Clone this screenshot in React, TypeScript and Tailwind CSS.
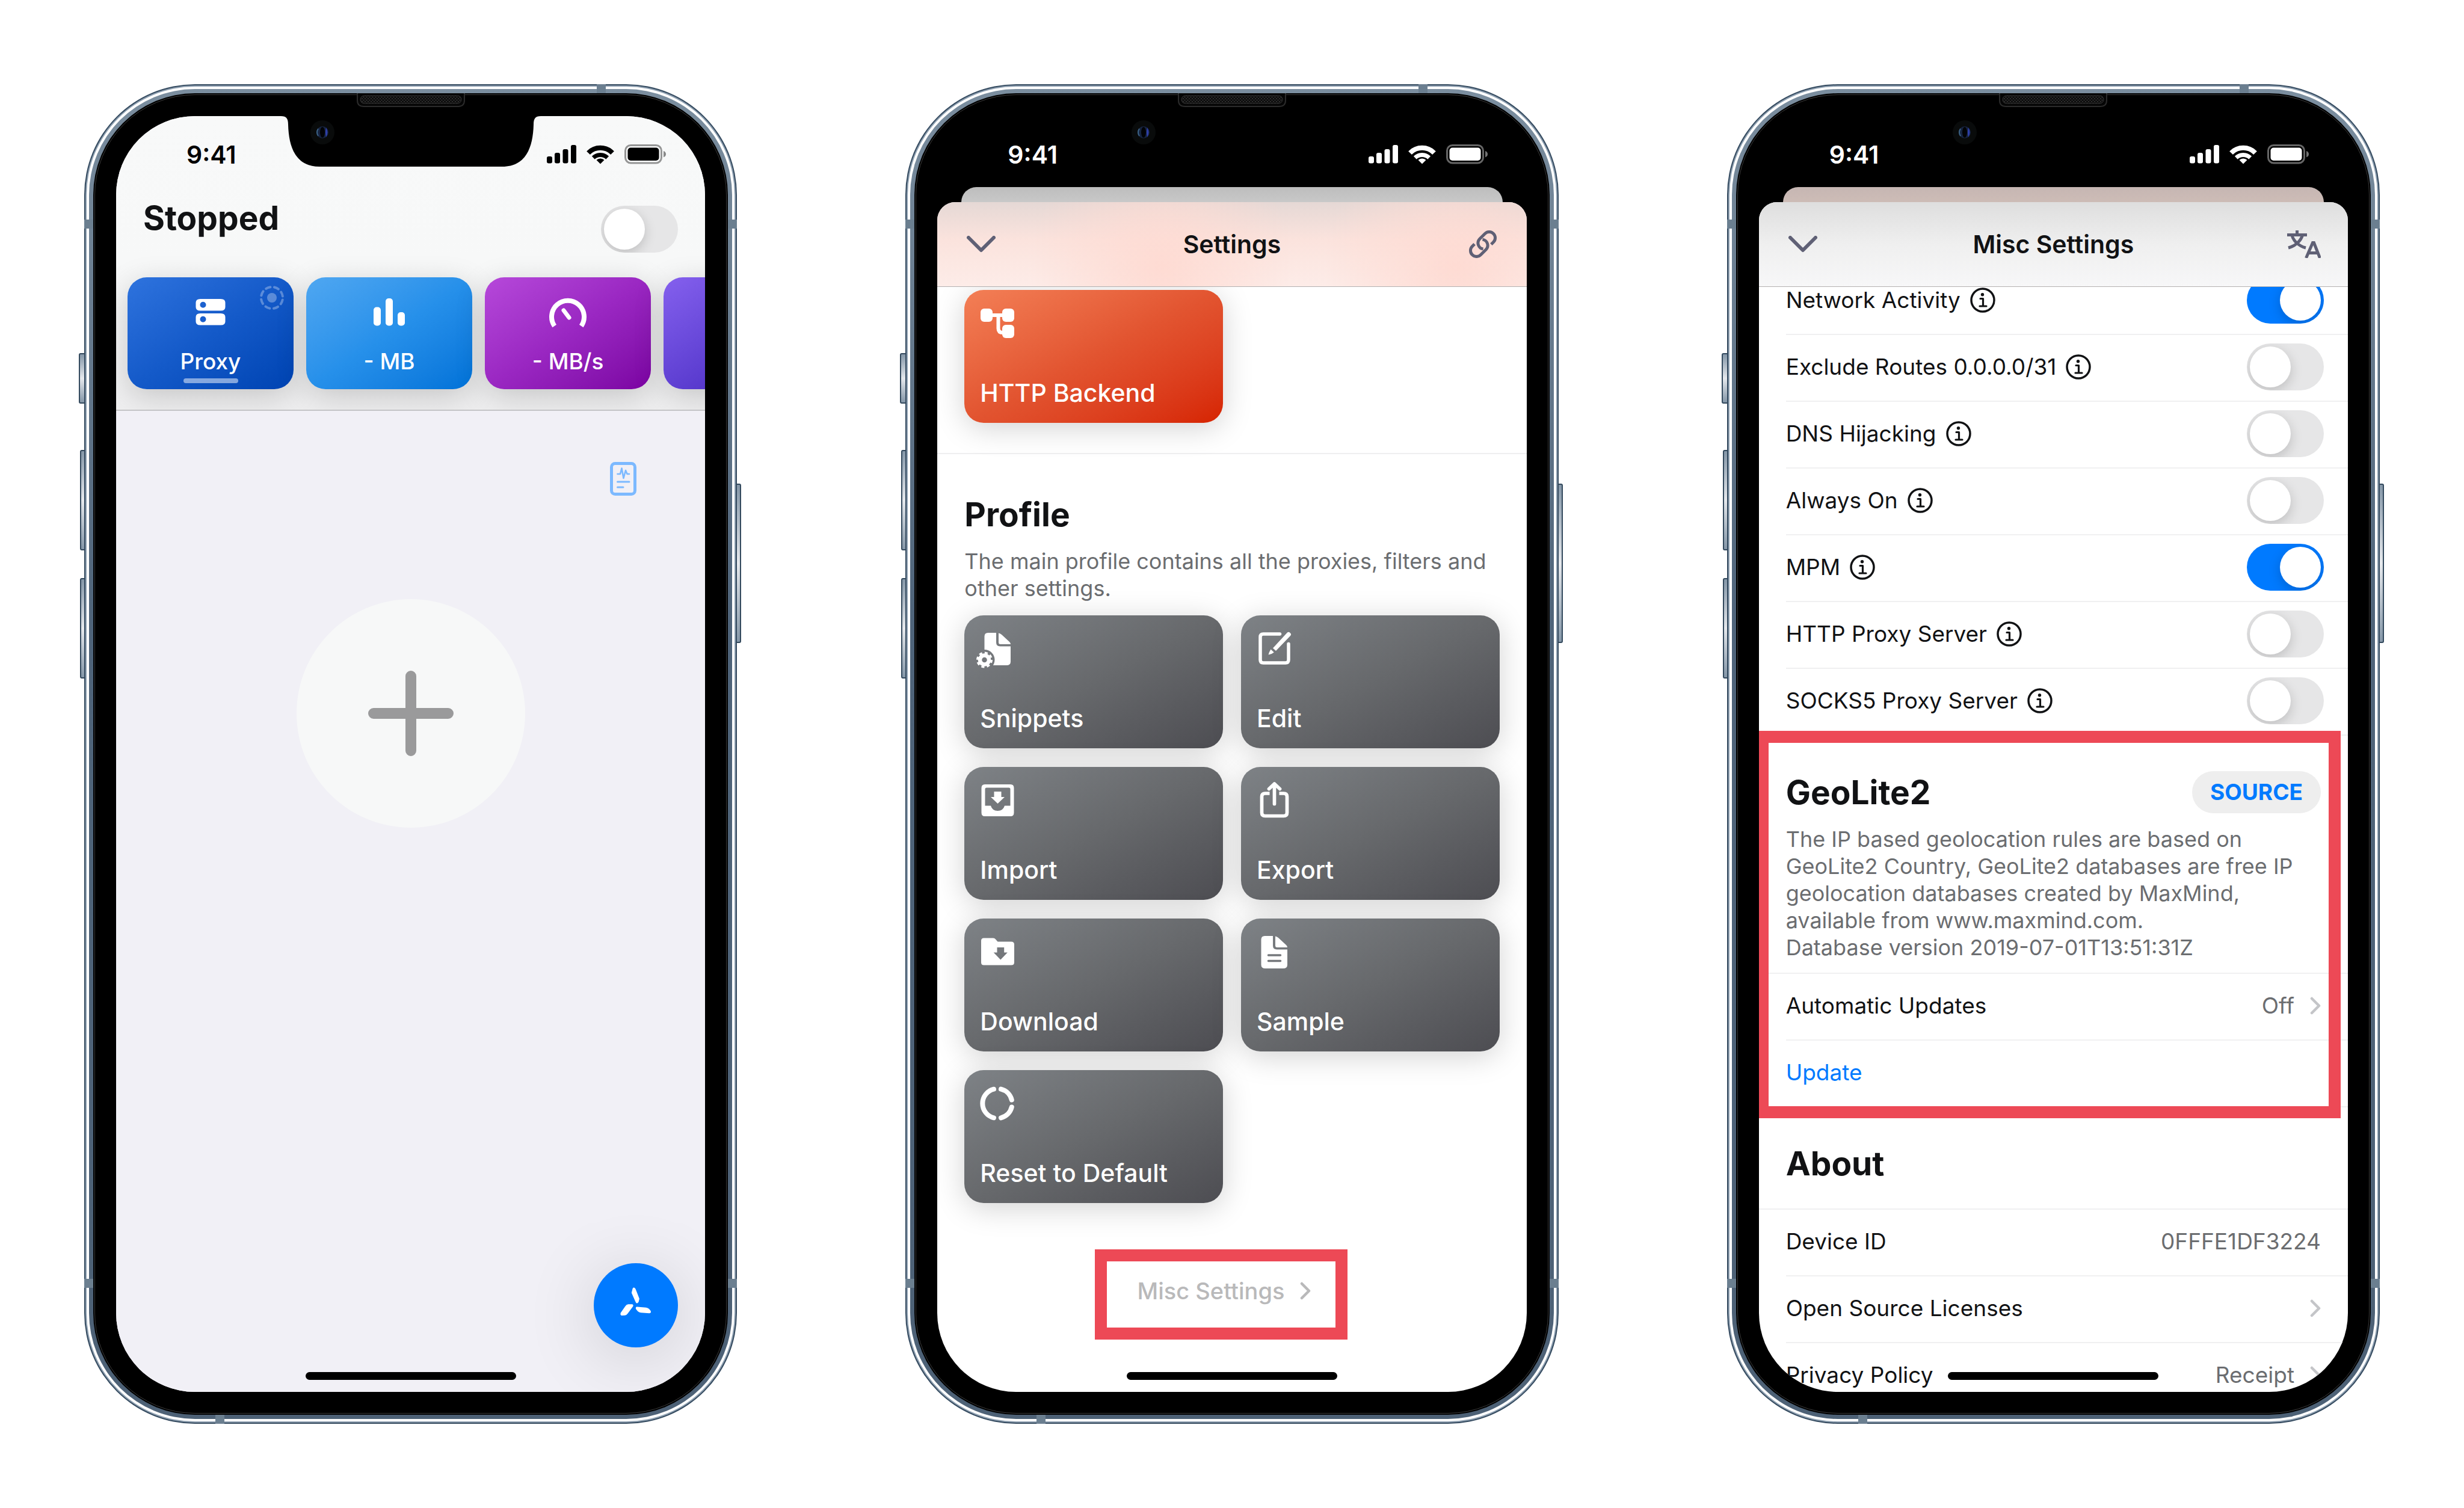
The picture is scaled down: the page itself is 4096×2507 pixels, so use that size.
import type { ReactNode } from "react";

/* ---------- Device ---------- */

function StatusIcons() {
  return (
    <svg viewBox="0 0 198 34" className="h-[34px] w-[198px]" fill="currentColor" aria-hidden="true">
      <rect x="0" y="20" width="9" height="11.5" rx="3" />
      <rect x="13" y="14" width="9" height="17.5" rx="3" />
      <rect x="26.5" y="8" width="9" height="23.5" rx="3" />
      <rect x="40" y="1" width="9" height="30.5" rx="3" />
      <g fill="none" stroke="currentColor">
        <path d="M69 14.2 A28 28 0 0 1 109 14.2" strokeWidth="8" />
        <path d="M77.3 22.2 A17 17 0 0 1 100.7 22.2" strokeWidth="7" />
      </g>
      <path d="M82.5 26 A9.5 9.5 0 0 1 95.5 26 L89 32.5 Z" />
      <rect x="130.5" y="1.5" width="60" height="29.5" rx="9" fill="none" stroke="currentColor" strokeWidth="3" opacity="0.4" />
      <rect x="134.5" y="5.5" width="52" height="21.5" rx="5" />
      <path d="M194 11 Q198 12.5 198 16.3 T194 21.5 Z" opacity="0.45" />
    </svg>
  );
}

function SensorHousing({ notch }: { notch: boolean }) {
  return (
    <svg
      viewBox="0 0 440 124"
      className="absolute left-1/2 top-[15px] z-20 h-[124px] w-[440px] -translate-x-1/2"
      aria-hidden="true"
    >
      <defs>
        <pattern id="grill" width="5" height="5" patternUnits="userSpaceOnUse">
          <rect width="5" height="5" fill="#0d0d0d" />
          <circle cx="1.5" cy="1.5" r="1" fill="#3a3a3a" />
          <circle cx="4" cy="4" r="1" fill="#3a3a3a" />
        </pattern>
      </defs>
      {notch && (
        <path
          d="M4 36 V38 C13 38 16 42 16 52 C17 92 30 122 68 122 H372 C410 122 423 92 424 52 C424 42 427 38 436 38 V36 Z"
          fill="#000"
        />
      )}
      <path d="M131 0 V12 Q131 22 142 22 H298 Q309 22 309 12 V0" fill="#050505" stroke="#2b2b2b" strokeWidth="2" />
      <rect x="136" y="4" width="168" height="13" rx="6.5" fill="url(#grill)" stroke="#333" strokeWidth="1" />
      <circle cx="73" cy="65" r="20" fill="#090b0b" />
      <circle cx="73" cy="65" r="10" fill="#16233f" />
      <ellipse cx="73" cy="65" rx="4" ry="9" fill="#020306" />
      <path d="M79 57 Q84 65 79 73 Q77 65 79 57Z" fill="#2f3fa8" />
      <path d="M66 59 Q62 65 66 71" fill="none" stroke="#3c6386" strokeWidth="2" />
    </svg>
  );
}

function Band({ place }: { place: string }) {
  return <span aria-hidden="true" className={`absolute z-10 size-[15px] bg-[#6b7f90] ${place}`} />;
}

function SideKey({ place }: { place: string }) {
  return (
    <span
      aria-hidden="true"
      className={`absolute rounded-[3px] border-2 border-[#33495d] bg-linear-to-b from-[#8597a8] via-[#e6e9ed] to-[#8597a8] ${place}`}
    />
  );
}

function Phone({ name, dark, children }: { name: string; dark: boolean; children: ReactNode }) {
  return (
    <section aria-label={name} className="relative">
      <SideKey place="-left-[9px] top-[447px] h-[84px] w-[13px]" />
      <SideKey place="-left-[7px] top-[608px] h-[167px] w-[13px]" />
      <SideKey place="-left-[7px] top-[821px] h-[167px] w-[13px]" />
      <SideKey place="-right-[7px] top-[664px] h-[265px] w-[13px]" />
      <div className="relative rounded-[184px] bg-[#344a5f] p-[2px]">
        <div className="rounded-[182px] bg-[#8fa0b1] p-[2px]">
          <div className="rounded-[180px] bg-white p-[4px]">
            <div className="rounded-[176px] bg-linear-to-b from-[#7b8e9f] via-[#4f647a] via-40% to-[#4d6176] p-[7px]">
              <div className="rounded-[169px] bg-black p-[2px]">
                <div className="rounded-[167px] border border-[#3a3a3a] bg-black p-[35px]">
                  <div
                    className={`relative flex aspect-[390/845] w-full flex-col overflow-hidden rounded-[131px] ${
                      dark ? "bg-black text-white" : "bg-[#f1f0f6] text-black"
                    }`}
                  >
                    {children}
                    <span
                      aria-hidden="true"
                      className="absolute bottom-[20px] left-1/2 z-20 h-[13px] w-[350px] -translate-x-1/2 rounded-full bg-black"
                    />
                  </div>
                </div>
              </div>
            </div>
          </div>
        </div>
        <Band place="top-0 right-[218px]" />
        <Band place="bottom-0 left-[218px]" />
        <Band place="left-0 top-[225px]" />
        <Band place="right-0 top-[225px]" />
        <Band place="left-0 bottom-[226px]" />
        <Band place="right-0 bottom-[226px]" />
        <SensorHousing notch={!dark} />
      </div>
    </section>
  );
}

function StatusBar() {
  return (
    <div className="flex h-[118px] shrink-0 items-center justify-between pl-[117px] pr-[65px] pt-[10px]">
      <time className="text-[41px] leading-[44px] font-semibold">9:41</time>
      <StatusIcons />
    </div>
  );
}

/* ---------- Shared controls ---------- */

function Toggle({ id, label, on }: { id: string; label?: string; on?: boolean }) {
  return (
    <input
      type="checkbox"
      role="switch"
      id={id}
      aria-label={label}
      defaultChecked={on}
      className="relative h-[78px] w-[128px] shrink-0 appearance-none overflow-hidden rounded-full bg-[#e6e6e7] before:absolute before:left-[5px] before:top-[5px] before:size-[68px] before:rounded-full before:bg-white before:shadow-[0_6px_20px_rgba(0,0,0,0.18)] before:content-[''] checked:bg-[#007aff] checked:before:left-[55px]"
    />
  );
}

function Chevron({ tone }: { tone: string }) {
  return (
    <svg viewBox="0 0 18 30" className={`h-[30px] w-[18px] shrink-0 ${tone}`} fill="none" aria-hidden="true">
      <path d="M3 3 L15 15 L3 27" stroke="currentColor" strokeWidth="4.500" strokeLinecap="round" strokeLinejoin="round" />
    </svg>
  );
}

function SheetHeader({ title, tint, action, children }: { title: string; tint: string; action: string; children: ReactNode }) {
  return (
    <header
      className={`relative z-10 flex h-[141px] shrink-0 items-center justify-between border-b border-[#b3b0b0] px-[45px] text-[#5f6075] ${tint}`}
    >
      <button type="button" aria-label="Close" className="flex size-[56px] items-center justify-center">
        <svg viewBox="0 0 48 28" className="h-[28px] w-[48px]" fill="none" aria-hidden="true">
          <path d="M3 3 L24 24 L45 3" stroke="currentColor" strokeWidth="6" strokeLinecap="round" strokeLinejoin="round" />
        </svg>
      </button>
      <h1 className="text-[41px] leading-[48px] font-semibold text-[#111214]">{title}</h1>
      <button type="button" aria-label={action} className="flex size-[56px] items-center justify-center">
        {children}
      </button>
    </header>
  );
}

function Sheet({ behind, children }: { behind: string; children: ReactNode }) {
  return (
    <>
      <div aria-hidden="true" className={`mx-[40px] h-[25px] shrink-0 rounded-t-[25px] ${behind}`} />
      <div className="flex min-h-0 flex-1 flex-col overflow-hidden rounded-t-[30px] bg-white text-[#111214]">{children}</div>
    </>
  );
}

/* ---------- Screen 1: dashboard ---------- */

function StatCard({ label, fill, active, children }: { label: string; fill: string; active?: boolean; children?: ReactNode }) {
  return (
    <button
      type="button"
      className={`relative flex h-[186px] w-[276px] shrink-0 flex-col items-center rounded-[32px] pt-[34px] text-white shadow-[0_12px_50px_rgba(0,0,0,0.18)] ${fill}`}
    >
      <svg viewBox="0 0 64 50" className="h-[50px] w-[64px] overflow-visible" fill="currentColor" aria-hidden="true">
        {children}
      </svg>
      <span className="mt-[34px] text-[37px] leading-[44px] font-medium">{label}</span>
      {active && (
        <>
          <span className="mt-[6px] h-[8px] w-[91px] rounded-full bg-white/50" />
          <svg viewBox="0 0 44 44" className="absolute right-[14px] top-[12px] size-[44px] opacity-30" fill="none" aria-hidden="true">
            <circle cx="22" cy="22" r="18" stroke="white" strokeWidth="4" strokeDasharray="7.5 6.64" strokeLinecap="round" transform="rotate(11 22 22)" />
            <circle cx="22" cy="22" r="8" fill="white" />
          </svg>
        </>
      )}
    </button>
  );
}

function Dashboard() {
  return (
    <>
      <header className="shrink-0 overflow-hidden border-b-2 border-[#c4c4c6] bg-linear-to-b from-[#f8f9f9] via-[#f7f8f8] via-50% to-[#efeff0] pb-[34px]">
        <StatusBar />
        <div className="flex items-start justify-between px-[45px] pt-[31px]">
          <h1 className="text-[55px] leading-[40px] font-bold text-[#111214]">Stopped</h1>
          <Toggle id="vpn" label="Connection" />
        </div>
        <div className="flex gap-[21px] pl-[19px] pt-[41px]">
          <StatCard label="Proxy" active fill="bg-linear-to-br from-[#2e73de] via-[#145ac9] to-[#0043b2]">
            <path
              fillRule="evenodd"
              d="M15 2 H49 Q56.500 2 56.500 8 V15.500 Q56.500 21.500 49 21.500 H15 Q7.500 21.500 7.500 15.500 V8 Q7.500 2 15 2 Z M19.500 6.800 A5 5 0 1 0 19.500 16.800 A5 5 0 1 0 19.500 6.800 Z M15 26 H49 Q56.500 26 56.500 32 V39.500 Q56.500 45.500 49 45.500 H15 Q7.500 45.500 7.500 39.500 V32 Q7.500 26 15 26 Z M19.500 30.800 A5 5 0 1 0 19.500 40.800 A5 5 0 1 0 19.500 30.800 Z"
            />
          </StatCard>
          <StatCard label="- MB" fill="bg-linear-to-br from-[#4fa7f1] via-[#2690ea] to-[#0072d8]">
            <rect x="6" y="15.500" width="12" height="31" rx="5" />
            <rect x="26" y="1" width="12" height="45.500" rx="5" />
            <rect x="46" y="24" width="12" height="22.500" rx="5" />
          </StatCard>
          <StatCard label="- MB/s" fill="bg-linear-to-br from-[#b648da] via-[#9a27c2] to-[#7b02a2]">
            <path d="M9.700 47 A27 27 0 1 1 54.300 47" fill="none" stroke="currentColor" strokeWidth="8" />
            <path d="M25 21 L34 33" fill="none" stroke="currentColor" strokeWidth="7" strokeLinecap="round" />
          </StatCard>
          <StatCard label="" fill="bg-linear-to-br from-[#8560ee] to-[#3f18b8]" />
        </div>
      </header>
      <main className="flex flex-1 flex-col items-end bg-[#f1f0f6]">
        <button type="button" aria-label="Activity log" className="mr-[114px] mt-[85px] text-[#7cb9ff]">
          <svg viewBox="0 0 44 56" className="h-[56px] w-[44px]" fill="none" stroke="currentColor" strokeLinecap="round" strokeLinejoin="round" aria-hidden="true">
            <rect x="2.500" y="2.500" width="39" height="51" rx="6" strokeWidth="5" />
            <path d="M12.500 20 H17 L19.500 10.500 L22.500 27 L26 14 L28.500 20 H32" strokeWidth="2.600" />
            <path d="M12.500 33 H32 M12.500 42 H22" strokeWidth="3" />
          </svg>
        </button>
        <button
          type="button"
          aria-label="Add"
          className="mt-[172px] flex size-[380px] items-center justify-center self-center rounded-full bg-[#f7f8f8] text-[#9a9a9b]"
        >
          <svg viewBox="0 0 142 142" className="size-[142px]" fill="none" aria-hidden="true">
            <path d="M71 9 V133 M9 71 H133" stroke="currentColor" strokeWidth="18" strokeLinecap="round" />
          </svg>
        </button>
        <button
          type="button"
          aria-label="Actions"
          className="mb-[74px] mr-[45px] mt-auto flex size-[140px] items-center justify-center rounded-full bg-[#007aff] text-white shadow-[0_16px_120px_rgba(0,0,0,0.16)]"
        >
          <svg viewBox="0 0 168 168" className="size-[140px]" fill="currentColor" stroke="currentColor" strokeWidth="3" strokeLinejoin="round" aria-hidden="true">
            <path d="M79 51 L77 59 L85 77 Q86 80 88 77 L89.500 71 L82 52 Q80.500 49 79 51 Z" />
            <path d="M76 83.500 H69 Q66 84 64 87 L55 100 Q54 103 57 103 L62 102.500 Q65 102 67 99 L77 85.500 Q78 83.500 76 83.500 Z" />
            <path d="M86 88.500 Q84.500 89 86 91.500 L89 95 Q91 97 94 97.300 L111 98.500 Q113.500 98.500 112 95.500 L109 92 Q107 90.500 104 90 Z" />
          </svg>
        </button>
      </main>
    </>
  );
}

/* ---------- Screen 2: settings ---------- */

const filePath =
  "M13.500 1 H27 V17 Q27 23.500 33.500 23.500 H51 V49 Q51 55 44 55 H14.500 Q7.500 55 7.500 49 V7 Q7.500 1 13.500 1 Z";
const foldPath = "M31 1.500 Q34 2 36 4 L49 16 Q51 18 51 20 H34 Q31 20 31 17 Z";

const tileIcons: Record<string, ReactNode> = {
  "HTTP Backend": (
    <>
      <path d="M18 14 H40 M30.500 14 V36 Q30.500 43 38 43" fill="none" stroke="currentColor" strokeWidth="6" />
      <rect x="1" y="3" width="20" height="22" rx="6" />
      <rect x="37" y="3" width="20" height="22" rx="6" />
      <rect x="37" y="30" width="20" height="22" rx="6" />
    </>
  ),
  Snippets: (
    <>
      <mask id="gear-gap">
        <rect x="-10" y="-5" width="80" height="80" fill="white" />
        <circle cx="7.500" cy="46" r="17" fill="black" />
      </mask>
      <g mask="url(#gear-gap)">
        <path d={filePath} />
        <path d={foldPath} />
      </g>
      <circle cx="7.500" cy="46" r="7.500" fill="none" stroke="currentColor" strokeWidth="6.500" />
      <circle cx="7.500" cy="46" r="11" fill="none" stroke="currentColor" strokeWidth="5" strokeDasharray="4.700 3.940" />
    </>
  ),
  Import: (
    <>
      <path
        fillRule="evenodd"
        d="M8 1 H51 Q56.500 1 56.500 7 V48 Q56.500 54 51 54 H8 Q2.500 54 2.500 48 V7 Q2.500 1 8 1 Z M11 6.500 Q8.500 6.500 8.500 9 V36.500 H18 Q20.500 45 29.500 45 Q38.500 45 41 36.500 H50.500 V9 Q50.500 6.500 48 6.500 Z"
      />
      <path d="M23.500 13 H35.500 V22 H41 L29.500 33 L18 22 H23.500 Z" />
    </>
  ),
  Download: (
    <path
      fillRule="evenodd"
      d="M6.500 4.500 H22 Q24.500 4.500 26 6.500 L29.500 10.500 H52 Q57 10.500 57 15 V45 Q57 49.500 52 49.500 H6.500 Q2 49.500 2 45 V9 Q2 4.500 6.500 4.500 Z M28.500 20 V28.500 H22.700 L34.300 40.500 L45.800 28.500 H40.200 V20 Z"
    />
  ),
  "Reset to Default": (
    <g fill="none" stroke="currentColor" strokeWidth="8" strokeLinecap="round">
      <path d="M23 3.700 A24.500 24.500 0 0 0 23 51.300" />
      <path d="M35 3.700 A24.500 24.500 0 0 1 52.800 21.500" />
      <path d="M52.800 33.500 A24.500 24.500 0 0 1 35 51.300" />
    </g>
  ),
  Edit: (
    <>
      <path
        d="M38.500 3 H11 Q6 3 6 8 V46 Q6 51 11 51 H48 Q53 51 53 46 V19.500"
        fill="none"
        stroke="currentColor"
        strokeWidth="5.500"
        strokeLinecap="round"
      />
      <path d="M27 26.500 L50.500 1 Q53 -1.500 55.500 1 Q58.500 3.500 56 6 L32 31 Z" />
      <path d="M23.500 28.500 Q21 32 19.500 37.500 Q25.500 36.500 28.800 33.500 Z" />
    </>
  ),
  Export: (
    <g fill="none" stroke="currentColor" strokeWidth="5.700" strokeLinecap="round" strokeLinejoin="round">
      <path d="M21.500 16 H14 Q8.500 16 8.500 21.500 V48 Q8.500 53.500 14 53.500 H45 Q50.500 53.500 50.500 48 V21.500 Q50.500 16 45 16 H37.500" strokeLinecap="butt" />
      <path d="M29.500 0 V33.500 M20.500 8.500 L29.500 0 L38.500 8.500" />
    </g>
  ),
  Sample: (
    <>
      <mask id="text-gap">
        <rect width="60" height="60" fill="white" />
        <path d="M19.500 33 H39.500 M19.500 42.500 H39.500" stroke="black" strokeWidth="3.500" strokeLinecap="round" />
      </mask>
      <path d={filePath} mask="url(#text-gap)" />
      <path d={foldPath} />
    </>
  ),
};

function Tile({ label, fill }: { label: string; fill: string }) {
  return (
    <button
      type="button"
      className={`flex h-[221px] flex-col items-start justify-between rounded-[32px] px-[26px] pb-[28px] pt-[28px] text-white shadow-[0_8px_50px_rgba(0,0,0,0.18)] ${fill}`}
    >
      <svg viewBox="0 0 58 58" className="size-[58px] overflow-visible" fill="currentColor" aria-hidden="true">
        {tileIcons[label]}
      </svg>
      <span className="text-[41px] leading-[44px] font-medium">{label}</span>
    </button>
  );
}

const profileTiles = ["Snippets", "Edit", "Import", "Export", "Download", "Sample", "Reset to Default"];

function Settings() {
  return (
    <>
      <StatusBar />
      <Sheet behind="bg-linear-to-b from-[#bdbdbd] to-[#c8c8c8]">
        <SheetHeader
          title="Settings"
          action="Link"
          tint="bg-[radial-gradient(circle_at_38%_75%,#fedbd3_0px,transparent_220px),radial-gradient(circle_at_88%_75%,#fedbd3_0px,transparent_220px),linear-gradient(#e5d8d5,#fbe3dd_45%,#fdece8)]"
        >
          <svg viewBox="62 66 166 166" className="size-[46px]" fill="none" stroke="currentColor" strokeWidth="18" aria-hidden="true">
            <path d="M195 150 L208.500 136.500 A36 36 0 0 0 157.500 85.500 L126.500 116.500 A36 36 0 0 0 147 177.500" />
            <path d="M95 148 L81.500 161.500 A36 36 0 0 0 132.500 212.500 L163.500 181.500 A36 36 0 0 0 143 120.500" />
          </svg>
        </SheetHeader>
        <main className="flex flex-1 flex-col">
          <div className="grid grid-cols-2 gap-[30px] border-b-2 border-[#efeff0] px-[45px] pb-[50px] pt-[5px]">
            <Tile label="HTTP Backend" fill="bg-linear-to-br from-[#f37f56] via-[#e25430] to-[#d62300]" />
          </div>
          <div className="px-[45px] pt-[68px]">
            <h2 className="text-[55px] leading-[64px] font-bold">Profile</h2>
            <p className="mt-[24px] text-[36px] leading-[45px] text-[#6b6d70]">
              The main profile contains all the proxies, filters and other settings.
            </p>
          </div>
          <div className="grid grid-cols-2 gap-x-[30px] gap-y-[31px] px-[45px] pt-[22px]">
            {profileTiles.map((label) => (
              <Tile key={label} label={label} fill="bg-linear-to-br from-[#7e8286] via-[#67696c] to-[#4d4d52]" />
            ))}
          </div>
          <button
            type="button"
            className="mr-[36px] mt-[77px] flex h-[150px] items-center gap-[26px] self-center border-[20px] border-[#ed4956] bg-white pb-[12px] pl-[51px] pr-[41px] text-[#b9b9ba]"
          >
            <span className="text-[38px] leading-[44px] font-medium">Misc Settings</span>
            <Chevron tone="text-[#b9b9ba]" />
          </button>
        </main>
      </Sheet>
    </>
  );
}

/* ---------- Screen 3: misc settings ---------- */

function InfoIcon() {
  return (
    <svg viewBox="0 0 42 42" className="size-[42px]" fill="none" stroke="currentColor" aria-hidden="true">
      <circle cx="21" cy="21" r="19" strokeWidth="3.500" />
      <circle cx="20.500" cy="11.800" r="2.700" fill="currentColor" stroke="none" />
      <path d="M17 18.500 H21.500 V30.500 M16 31 H27" strokeWidth="3.200" strokeLinecap="round" strokeLinejoin="round" />
    </svg>
  );
}

const switches = [
  { label: "Network Activity", on: true },
  { label: "Exclude Routes 0.0.0.0/31", on: false },
  { label: "DNS Hijacking", on: false },
  { label: "Always On", on: false },
  { label: "MPM", on: true },
  { label: "HTTP Proxy Server", on: false },
  { label: "SOCKS5 Proxy Server", on: false },
];

function LinkRow({ label, value, tone }: { label: string; value?: string; tone?: string }) {
  return (
    <a href="#" className="flex h-[111px] items-center gap-[26px] pl-[45px] pr-[45px] text-[37px] leading-[44px]">
      <span className={`flex-1 ${tone ?? ""}`}>{label}</span>
      {value && <span className="text-[#6b6d70]">{value}</span>}
      {!tone && <Chevron tone="text-[#c4c5c8]" />}
    </a>
  );
}

function Separator({ full }: { full?: boolean }) {
  return <div aria-hidden="true" className={`-mb-[2px] h-[2px] shrink-0 bg-[#f0f0f1] ${full ? "" : "ml-[45px]"}`} />;
}

function MiscSettings() {
  return (
    <>
      <StatusBar />
      <Sheet behind="bg-linear-to-b from-[#c6b6b3] to-[#cdbcb6]">
        <SheetHeader title="Misc Settings" action="Language" tint="bg-linear-to-b from-[#dedede] via-[#efefef] via-50% to-[#f7f7f8]">
          <svg viewBox="0 0 56 46" className="h-[46px] w-[56px]" fill="none" stroke="currentColor" strokeWidth="5" aria-hidden="true">
            <path d="M0 7.500 H33 M16.500 0 V8 M25.500 8 C23 17 14 26 2 29 M8 8 C10 17 19 26 31 29" />
            <path d="M31.500 46 L42.500 20.500 H44.500 L54.500 46 M36 37.500 H50.500" />
          </svg>
        </SheetHeader>
        <main className="-mt-[33px]">
          {switches.map(({ label, on }, index) => {
            const id = `switch-${index}`;
            return (
              <div key={label}>
                <div className="flex h-[111px] items-center gap-[16px] pl-[45px] pr-[40px] text-[37px] leading-[44px]">
                  <label htmlFor={id}>{label}</label>
                  <button type="button" aria-label={`About ${label}`} className="mr-auto">
                    <InfoIcon />
                  </button>
                  <Toggle id={id} on={on} />
                </div>
                <Separator full={index === switches.length - 1} />
              </div>
            );
          })}
          <section className="relative pt-[61px]">
            <div className="flex h-[70px] items-center justify-between px-[45px]">
              <h2 className="text-[55px] leading-[64px] font-bold">GeoLite2</h2>
              <button type="button" className="h-[70px] rounded-full bg-[#eeeeee] px-[30px] text-[37px] leading-[44px] font-bold text-[#007aff]">
                SOURCE
              </button>
            </div>
            <p className="px-[45px] pb-[19px] pt-[21px] text-[36px] leading-[45px] text-[#6b6d70]">
              The IP based geolocation rules are based on GeoLite2 Country, GeoLite2 databases are free IP geolocation databases created by MaxMind,
              available from www.maxmind.com.
              <br />
              Database version 2019-07-01T13:51:31Z
            </p>
            <Separator full />
            <LinkRow label="Automatic Updates" value="Off" />
            <Separator />
            <LinkRow label="Update" tone="text-[#007aff]" />
            <span aria-hidden="true" className="absolute -bottom-[20px] -left-[4px] -top-[6px] right-[12px] border-[20px] border-[#ed4956]" />
          </section>
          <Separator full />
          <section className="pt-[60px]">
            <h2 className="px-[45px] pb-[40px] text-[55px] leading-[70px] font-bold">About</h2>
            <Separator full />
            <div className="flex h-[111px] items-center justify-between px-[45px] text-[37px] leading-[44px]">
              <span>Device ID</span>
              <span className="text-[#6b6d70]">0FFFE1DF3224</span>
            </div>
            <Separator />
            <LinkRow label="Open Source Licenses" />
            <Separator />
            <LinkRow label="Privacy Policy" value="Receipt" />
          </section>
        </main>
      </Sheet>
    </>
  );
}

/* ---------- Page ---------- */

export default function App() {
  return (
    <div className="grid min-h-screen grid-cols-3 items-center bg-white font-['Inter',sans-serif]">
      <div className="px-[140px]">
        <Phone name="Dashboard" dark={false}>
          <Dashboard />
        </Phone>
      </div>
      <div className="px-[140px]">
        <Phone name="Settings" dark>
          <Settings />
        </Phone>
      </div>
      <div className="px-[140px]">
        <Phone name="Misc Settings" dark>
          <MiscSettings />
        </Phone>
      </div>
    </div>
  );
}
